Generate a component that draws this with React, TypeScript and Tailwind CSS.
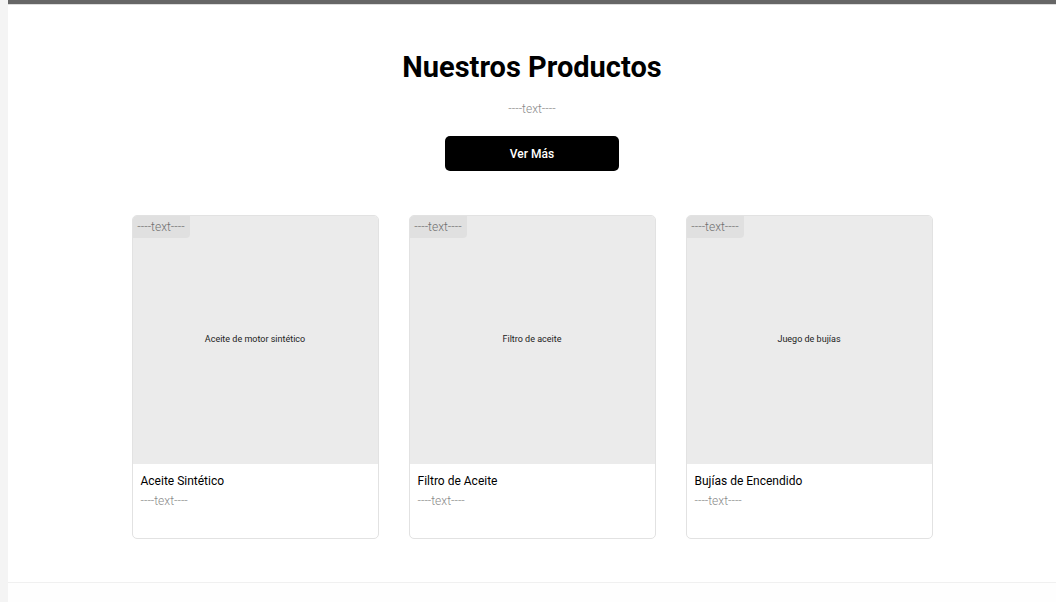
import React from "react";

const products = [
  { title: "Aceite Sintético", img: "Aceite de motor sintético" },
  { title: "Filtro de Aceite", img: "Filtro de aceite" },
  { title: "Bujías de Encendido", img: "Juego de bujías" },
];

export default function App() {
  return (
    <div className="flex h-[602px] w-[1056px] overflow-hidden bg-[#f4f4f4]" style={{ fontFamily: "Roboto, 'Liberation Sans', sans-serif" }}>
      <div className="ml-[8px] flex flex-1 flex-col bg-white">
        <div className="h-[5px] bg-[#666666] border-b border-[#dddddd]" />
        <section className="flex flex-col items-center pt-[45px] h-[577px]">
          <h1 className="text-[29px] font-bold leading-[34px] text-black">Nuestros Productos</h1>
          <p className="mt-[18px] text-[12px] font-light leading-[14px] text-[#8a8a8a]">----text----</p>
          <button className="mt-[20px] h-[35px] w-[174px] rounded-[5px] bg-black text-[12px] font-medium text-white">Ver Más</button>
          <div className="mt-[44px] flex gap-[30px]">
            {products.map((p) => (
              <div key={p.title} className="flex h-[324px] w-[247px] flex-col overflow-hidden rounded-[5px] border border-[#e2e2e2] bg-white">
                <div className="relative flex h-[248px] items-center justify-center bg-[#ebebeb]">
                  <span className="absolute left-0 top-0 flex h-[22px] w-[57px] items-center justify-center rounded-br-[4px] bg-[#e0e0e0] text-[12px] font-light text-[#707070]">----text----</span>
                  <span className="text-[9px] text-[#222222]">{p.img}</span>
                </div>
                <div className="flex flex-col px-[8px] pt-[9px]">
                  <span className="text-[12px] leading-[16px] text-black">{p.title}</span>
                  <span className="mt-[5px] text-[12px] font-light leading-[14px] text-[#8a8a8a]">----text----</span>
                </div>
              </div>
            ))}
          </div>
        </section>
        <div className="flex-1 border-t border-[#f0f0f0] bg-[#fefefe]" />
      </div>
    </div>
  );
}
